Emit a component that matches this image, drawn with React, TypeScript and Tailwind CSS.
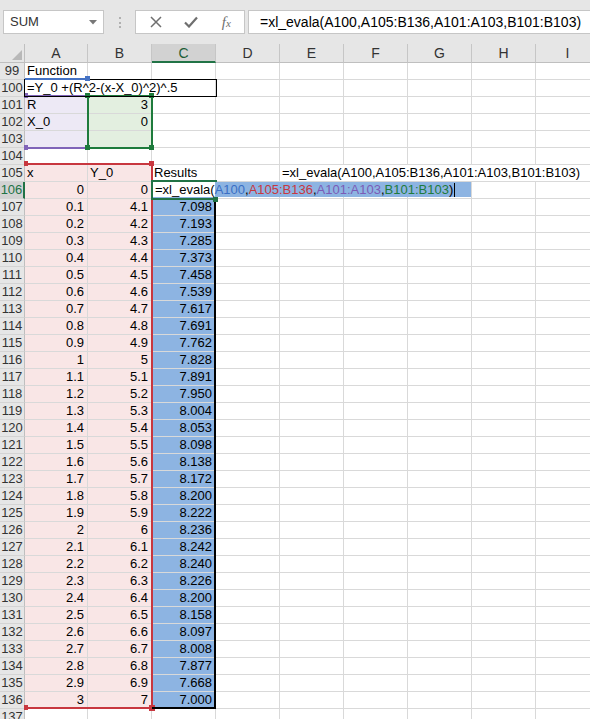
import React from "react";

type Cell = { t?: string; r?: boolean; bg?: string; span?: number; w?: string };

const PINK = "bg-[#f9e6e6]";
const PURP = "bg-[#ede9f5]";
const GRN = "bg-[#e3efe0]";
const BLUE = "bg-[#8db4e2]";

const results = [
  "7.098", "7.193", "7.285", "7.373", "7.458", "7.539", "7.617", "7.691", "7.762", "7.828",
  "7.891", "7.950", "8.004", "8.053", "8.098", "8.138", "8.172", "8.200", "8.222", "8.236",
  "8.242", "8.240", "8.226", "8.200", "8.158", "8.097", "8.008", "7.877", "7.668", "7.000",
];

const rows: { n: number; cells: Cell[] }[] = [
  { n: 99, cells: [{ t: "Function" }] },
  { n: 100, cells: [{ t: "=Y_0 +(R^2-(x-X_0)^2)^.5", span: 3, w: "w-[191px]" }] },
  { n: 101, cells: [{ t: "R", bg: PURP }, { t: "3", r: true, bg: GRN }] },
  { n: 102, cells: [{ t: "X_0", bg: PURP }, { t: "0", r: true, bg: GRN }] },
  { n: 103, cells: [{ bg: PURP }, { bg: GRN }] },
  { n: 104, cells: [] },
  {
    n: 105,
    cells: [
      { t: "x", bg: PINK },
      { t: "Y_0", bg: PINK },
      { t: "Results" },
      {},
      { t: "=xl_evala(A100,A105:B136,A101:A103,B101:B103)", span: 5, w: "w-[320px]" },
    ],
  },
  ...Array.from({ length: 31 }, (_, i) => ({
    n: 106 + i,
    cells: [
      { t: String(i / 10), r: true, bg: PINK },
      { t: i === 0 ? "0" : String((i + 40) / 10), r: true, bg: PINK },
      { t: i === 0 ? "" : results[i - 1], r: true, bg: BLUE },
    ],
  })),
  { n: 137, cells: [] },
];

const COLS = ["A", "B", "C", "D", "E", "F", "G", "H", "I"];

function Row({ n, cells }: { n: number; cells: Cell[] }) {
  const out: React.ReactNode[] = [];
  let col = 0;
  cells.forEach((c, k) => {
    out.push(
      <div
        key={k}
        className={`${c.w ?? (col === 0 ? "w-[63px]" : "w-[64px]")} shrink-0 h-full border-r border-b border-[#d9d9d9] whitespace-nowrap ${c.bg ?? ""} ${c.r ? "text-right pr-[3px]" : "pl-[2px]"}`}
      >
        {c.t}
      </div>
    );
    col += c.span ?? 1;
  });
  while (col < 9) {
    out.push(
      <div
        key={"e" + col}
        className={`${col === 0 ? "w-[63px]" : "w-[64px]"} shrink-0 h-full border-r border-b border-[#d9d9d9]`}
      />
    );
    col++;
  }
  const active = n === 106;
  return (
    <div className="flex h-[17px] text-[13px] leading-[16px] text-black">
      <div
        className={`w-[25px] shrink-0 h-full border-b border-[#d4d4d4] text-center ${
          active
            ? "bg-[#d2d2d2] text-[#217346] border-r-2 border-r-[#217346]"
            : "bg-[#e6e6e6] text-[#333] border-r border-r-[#bfbfbf]"
        }`}
      >
        {n}
      </div>
      {out}
    </div>
  );
}

export default function App() {
  return (
    <div className="relative w-[590px] h-[719px] overflow-hidden bg-white font-['Liberation_Sans',Arial,sans-serif]">
      {/* formula bar */}
      <div className="h-[44px] bg-[#e6e6e6] flex items-start pt-[10px]">
        <div className="ml-[3px] w-[101px] h-[24px] shrink-0 bg-white border border-[#c6c6c6] flex items-center justify-between pl-[6px] pr-[6px]">
          <span className="text-[13px] text-[#333]">SUM</span>
          <svg width="8" height="5" viewBox="0 0 8 5">
            <path d="M0 0h8L4 4.5z" fill="#777" />
          </svg>
        </div>
        <div className="ml-[15px] mt-[7px] flex flex-col gap-[2.5px]">
          <div className="w-[2px] h-[2px] bg-[#b0b0b0]" />
          <div className="w-[2px] h-[2px] bg-[#b0b0b0]" />
          <div className="w-[2px] h-[2px] bg-[#b0b0b0]" />
        </div>
        <div className="ml-[14px] w-[110px] h-[24px] shrink-0 bg-white border border-[#c6c6c6] flex items-center pl-[2px]">
          <div className="w-[36px] flex justify-center">
            <svg width="12" height="12" viewBox="0 0 12 12">
              <path d="M1 1l10 10M11 1L1 11" stroke="#6f6f6f" strokeWidth="1.5" />
            </svg>
          </div>
          <div className="w-[36px] flex justify-center">
            <svg width="14" height="12" viewBox="0 0 14 12">
              <path d="M1 6.5l4 4L13 1.5" stroke="#6f6f6f" strokeWidth="2.2" fill="none" />
            </svg>
          </div>
          <div className="w-[36px] flex justify-center">
            <span className="font-['Liberation_Serif',serif] italic text-[#6f6f6f] text-[15px] leading-none">
              f<span className="text-[11px]">x</span>
            </span>
          </div>
        </div>
        <div className="ml-[3px] w-[360px] h-[24px] shrink-0 bg-white border border-[#c6c6c6] pl-[11px] text-[14px] leading-[22px] text-black whitespace-nowrap">
          =xl_evala(A100,A105:B136,A101:A103,B101:B103)
        </div>
      </div>

      {/* column headers */}
      <div className="flex h-[19px] bg-[#e6e6e6] text-[14px] leading-[18px] text-[#333]">
        <div className="w-[25px] shrink-0 h-full border-r border-b border-[#bfbfbf] flex items-end justify-end pr-[2px] pb-[2px]">
          <svg width="10" height="10" viewBox="0 0 10 10">
            <path d="M10 0V10H0z" fill="#b8b8b8" />
          </svg>
        </div>
        {COLS.map((c, i) => (
          <div
            key={c}
            className={`${i === 0 ? "w-[63px]" : "w-[64px]"} shrink-0 h-full text-center border-r border-r-[#c6c6c6] ${
              c === "C"
                ? "bg-[#d2d2d2] text-[#1d5e38] border-b-2 border-b-[#217346]"
                : "border-b border-b-[#bfbfbf]"
            }`}
          >
            {c}
          </div>
        ))}
      </div>

      {/* grid */}
      {rows.map((r) => (
        <Row key={r.n} n={r.n} cells={r.cells} />
      ))}

      {/* A105:B136 reference (red) */}
      <div className="absolute left-[24px] top-[163px] w-[129px] h-[2px] bg-[#c8373f]" />
      <div className="absolute left-[151px] top-[163px] w-[2px] h-[546px] bg-[#c8373f]" />
      <div className="absolute left-[24px] top-[707px] w-[129px] h-[2px] bg-[#c8373f]" />
      <div className="absolute left-[24px] top-[161px] w-[4px] h-[5px] bg-[#c8373f]" />
      <div className="absolute left-[149px] top-[161px] w-[5px] h-[5px] bg-[#c8373f]" />
      <div className="absolute left-[24px] top-[705px] w-[4px] h-[5px] bg-[#c8373f]" />
      <div className="absolute left-[149px] top-[705px] w-[6px] h-[6px] bg-[#c8373f]" />

      {/* A101:A103 reference (purple) */}
      <div className="absolute left-[24px] top-[95px] w-[64px] h-[2px] bg-[#8064b8]" />
      <div className="absolute left-[24px] top-[147px] w-[64px] h-[2px] bg-[#8064b8]" />
      <div className="absolute left-[24px] top-[93px] w-[4px] h-[5px] bg-[#8064b8]" />
      <div className="absolute left-[24px] top-[145px] w-[4px] h-[5px] bg-[#8064b8]" />

      {/* B101:B103 reference (green) */}
      <div className="absolute left-[87px] top-[95px] w-[66px] h-[54px] border-2 border-[#1e7b3c]" />
      <div className="absolute left-[85px] top-[93px] w-[5px] h-[5px] bg-[#1e7b3c]" />
      <div className="absolute left-[149px] top-[93px] w-[5px] h-[5px] bg-[#1e7b3c]" />
      <div className="absolute left-[85px] top-[145px] w-[5px] h-[5px] bg-[#1e7b3c]" />
      <div className="absolute left-[149px] top-[145px] w-[5px] h-[5px] bg-[#1e7b3c]" />

      {/* A100 box + blue reference */}
      <div className="absolute left-[24px] top-[79px] w-[193px] h-[18px] border border-black" />
      <div className="absolute left-[25px] top-[78px] w-[63px] h-[2px] bg-[#4472c4]" />
      <div className="absolute left-[85px] top-[76px] w-[5px] h-[5px] bg-[#4472c4]" />

      {/* C column border */}
      <div className="absolute left-[214px] top-[199px] w-[2px] h-[510px] bg-black" />
      <div className="absolute left-[152px] top-[707px] w-[64px] h-[2px] bg-black" />

      {/* active cell C106 */}
      <div className="absolute left-[151px] top-[180px] w-[66px] h-[20px] border-2 border-[#217346]" />
      <div className="absolute left-[213px] top-[197px] w-[5px] h-[5px] bg-[#217346]" />

      {/* in-cell editor */}
      <div className="absolute left-[153px] top-[182px] w-[318px] h-[15px] flex bg-white text-[13px] leading-[15px] text-black whitespace-nowrap">
        <span className="pl-[2px]">=xl_evala(</span>
        <div className="flex-1 flex items-start bg-[#8db4e2]">
          <span className="text-[#3a6fc4]">A100</span>
          <span>,</span>
          <span className="text-[#c8373f]">A105:B136</span>
          <span>,</span>
          <span className="text-[#7b5bb6]">A101:A103</span>
          <span>,</span>
          <span className="text-[#1e7b3c]">B101:B103</span>
          <span>)</span>
          <span className="ml-[1px] mt-[1px] w-px h-[14px] bg-black" />
        </div>
      </div>
    </div>
  );
}
